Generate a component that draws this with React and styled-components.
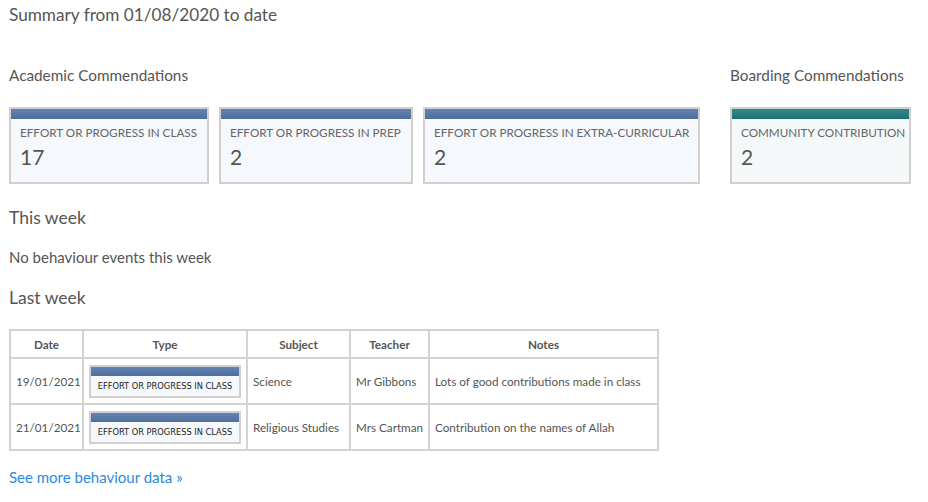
import styled, { createGlobalStyle } from "styled-components";

const GlobalStyle = createGlobalStyle`
  body {
    margin: 0;
    background: #ffffff;
    font-family: "Lato", "Open Sans", sans-serif;
    color: #555555;
  }
`;

const Page = styled.div`
  padding: 4px 9px 20px 9px;
`;

const Title = styled.h1`
  margin: 0;
  font-size: 17.2px;
  font-weight: 400;
  line-height: 22px;
  color: #555;
`;

const Groups = styled.div`
  display: flex;
  gap: 30px;
  margin-top: 39px;
`;

const Group = styled.div`
  display: flex;
  flex-direction: column;
`;

const GroupTitle = styled.h3`
  margin: 0 0 22px 0;
  font-size: 15.3px;
  font-weight: 400;
  line-height: 20px;
  color: #555;
`;

const Cards = styled.div`
  display: flex;
  gap: 10px;
`;

const Card = styled.div`
  width: ${(p) => p.$w}px;
  height: 77px;
  box-sizing: border-box;
  border: 2px solid #d3cfcf;
  background: ${(p) => (p.$teal ? "#f4f8f9" : "#f5f8fc")};
  display: flex;
  flex-direction: column;
`;

const Bar = styled.div`
  height: 10px;
  background: ${(p) =>
    p.$teal
      ? "linear-gradient(#2d8a8c, #1f6f72)"
      : "linear-gradient(#6283b4, #4f6e9b)"};
`;

const CardLabel = styled.div`
  padding: 5px 9px 0 9px;
  font-size: 11.7px;
  line-height: 16px;
  color: #666;
  white-space: nowrap;
`;

const CardValue = styled.div`
  padding: 5px 9px 0 9px;
  font-size: 21px;
  line-height: 24px;
  color: #555;
`;

const SectionTitle = styled.h3`
  margin: ${(p) => p.$top}px 0 0 0;
  font-size: 17.5px;
  font-weight: 400;
  line-height: 22px;
  color: #555;
`;

const Text = styled.p`
  margin: 18px 0 0 0;
  font-size: 15px;
  line-height: 20px;
  color: #555;
`;

const Table = styled.table`
  margin-top: 20px;
  width: 648px;
  table-layout: fixed;
  border-collapse: collapse;
  border: 2px solid #d6d2d2;
  font-size: 11.7px;
  color: #555;
`;

const Th = styled.th`
  border: 2px solid #d6d2d2;
  height: 26px;
  padding: 0 6px;
  font-weight: 700;
  text-align: center;
`;

const Td = styled.td`
  border: 2px solid #d6d2d2;
  height: 44px;
  padding: 0 5px;
  text-align: ${(p) => (p.$center ? "center" : "left")};
  white-space: nowrap;
`;

const Badge = styled.div`
  border: 2px solid #d3cfcf;
  background: #f5f8fc;
  width: 152px;
  box-sizing: border-box;
`;

const BadgeBar = styled.div`
  height: 9px;
  background: linear-gradient(#6283b4, #4f6e9b);
`;

const BadgeLabel = styled.div`
  font-family: "DejaVu Sans Condensed", "Liberation Sans", sans-serif;
  font-size: 9.2px;
  line-height: 20px;
  color: #222;
  text-align: center;
  white-space: nowrap;
`;

const Link = styled.a`
  display: inline-block;
  margin-top: 17px;
  font-size: 15px;
  color: #2a8ae0;
  text-decoration: none;
`;

const academic = [
  { label: "EFFORT OR PROGRESS IN CLASS", value: 17, w: 200 },
  { label: "EFFORT OR PROGRESS IN PREP", value: 2, w: 194 },
  { label: "EFFORT OR PROGRESS IN EXTRA-CURRICULAR", value: 2, w: 277 },
];

const columns = [
  { name: "Date", w: 73 },
  { name: "Type", w: 164 },
  { name: "Subject", w: 103 },
  { name: "Teacher", w: 79 },
  { name: "Notes", w: 229 },
];

const rows = [
  {
    date: "19/01/2021",
    type: "EFFORT OR PROGRESS IN CLASS",
    subject: "Science",
    teacher: "Mr Gibbons",
    notes: "Lots of good contributions made in class",
  },
  {
    date: "21/01/2021",
    type: "EFFORT OR PROGRESS IN CLASS",
    subject: "Religious Studies",
    teacher: "Mrs Cartman",
    notes: "Contribution on the names of Allah",
  },
];

export default function App() {
  return (
    <>
      <GlobalStyle />
      <Page>
        <Title>Summary from 01/08/2020 to date</Title>
        <Groups>
          <Group>
            <GroupTitle>Academic Commendations</GroupTitle>
            <Cards>
              {academic.map((c) => (
                <Card key={c.label} $w={c.w}>
                  <Bar />
                  <CardLabel>{c.label}</CardLabel>
                  <CardValue>{c.value}</CardValue>
                </Card>
              ))}
            </Cards>
          </Group>
          <Group>
            <GroupTitle>Boarding Commendations</GroupTitle>
            <Cards>
              <Card $w={181} $teal>
                <Bar $teal />
                <CardLabel>COMMUNITY CONTRIBUTION</CardLabel>
                <CardValue>2</CardValue>
              </Card>
            </Cards>
          </Group>
        </Groups>
        <SectionTitle $top={23}>This week</SectionTitle>
        <Text>No behaviour events this week</Text>
        <SectionTitle $top={20}>Last week</SectionTitle>
        <Table>
          <colgroup>
            {columns.map((c) => (
              <col key={c.name} style={{ width: c.w }} />
            ))}
          </colgroup>
          <thead>
            <tr>
              {columns.map((c) => (
                <Th key={c.name}>{c.name}</Th>
              ))}
            </tr>
          </thead>
          <tbody>
            {rows.map((r) => (
              <tr key={r.date}>
                <Td $center>{r.date}</Td>
                <Td>
                  <Badge>
                    <BadgeBar />
                    <BadgeLabel>{r.type}</BadgeLabel>
                  </Badge>
                </Td>
                <Td>{r.subject}</Td>
                <Td>{r.teacher}</Td>
                <Td>{r.notes}</Td>
              </tr>
            ))}
          </tbody>
        </Table>
        <Link href="#">See more behaviour data »</Link>
      </Page>
    </>
  );
}
